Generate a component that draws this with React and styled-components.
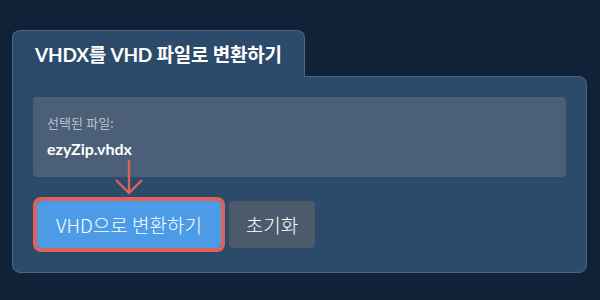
import React from 'react';
import styled, { createGlobalStyle } from 'styled-components';

const GlobalStyle = createGlobalStyle`
    html, body {
        margin:0;
        padding:0;
        background:#0f2238;
    }
    body{
        width:600px;
        height:300px;
        overflow:hidden;
        font-family:Lato, "Noto Sans CJK KR", sans-serif;
    }
`

const Page = styled.div`
    padding:30px 13px 0 12px;
    box-sizing:border-box;
`

const Tab = styled.div`
    display:inline-block;
    position:relative;
    z-index:1;
    margin-bottom:-1px;
    padding:12px 22px 10px;
    background:#2c4a6a;
    border:1px solid #4b6686;
    border-bottom:none;
    border-radius:8px 8px 0 0;
    color:#fff;
    font-size:19px;
    font-weight:700;
    line-height:24px;
    letter-spacing:-0.2px;
`

const Panel = styled.div`
    background:#2c4a6a;
    border:1px solid #4b6686;
    border-radius:0 8px 8px 8px;
    padding:20px 20px 24px;
`

const FileBox = styled.div`
    background:#4b6078;
    border-radius:4px;
    padding:17px 14px 18px;
    display:flex;
    flex-direction:column;
    gap:7px;
`

const Label = styled.div`
    color:#b8c2cd;
    font-size:13px;
    line-height:18px;
`

const FileName = styled.div`
    color:#fff;
    font-size:16px;
    font-weight:700;
    line-height:20px;
`

const Actions = styled.div`
    display:flex;
    gap:8px;
    margin-top:24px;
`

const ButtonWrap = styled.div`
    position:relative;
    margin-left:4px;
`

const Button = styled.button`
    height:47px;
    width:${p => p.$w}px;
    padding:0;
    border:none;
    border-radius:4px;
    background:${p => p.$primary ? '#4b9be6' : '#4b5b6c'};
    color:#fff;
    font-family:"Noto Sans CJK KR", sans-serif;
    font-weight:300;
    font-size:19px;
    outline:${p => p.$highlight ? '4px solid #e0605a' : 'none'};
`

const Arrow = styled.svg`
    position:absolute;
    left:77px;
    top:-42px;
`

const App = () => {
    return (
        <Page>
            <GlobalStyle />
            <Tab>VHDX를 VHD 파일로 변환하기</Tab>
            <Panel>
                <FileBox>
                    <Label>선택된 파일:</Label>
                    <FileName>ezyZip.vhdx</FileName>
                </FileBox>
                <Actions>
                    <ButtonWrap>
                        <Arrow width="30" height="38" viewBox="0 0 30 38">
                            <path d="M15 1 L15 34 M2 21 L15 34 L28 21" fill="none" stroke="#e0605a" strokeWidth="2.4" />
                        </Arrow>
                        <Button $primary $highlight $w={184}>VHD으로 변환하기</Button>
                    </ButtonWrap>
                    <Button $w={86}>초기화</Button>
                </Actions>
            </Panel>
        </Page>
    )
}

export default App;
